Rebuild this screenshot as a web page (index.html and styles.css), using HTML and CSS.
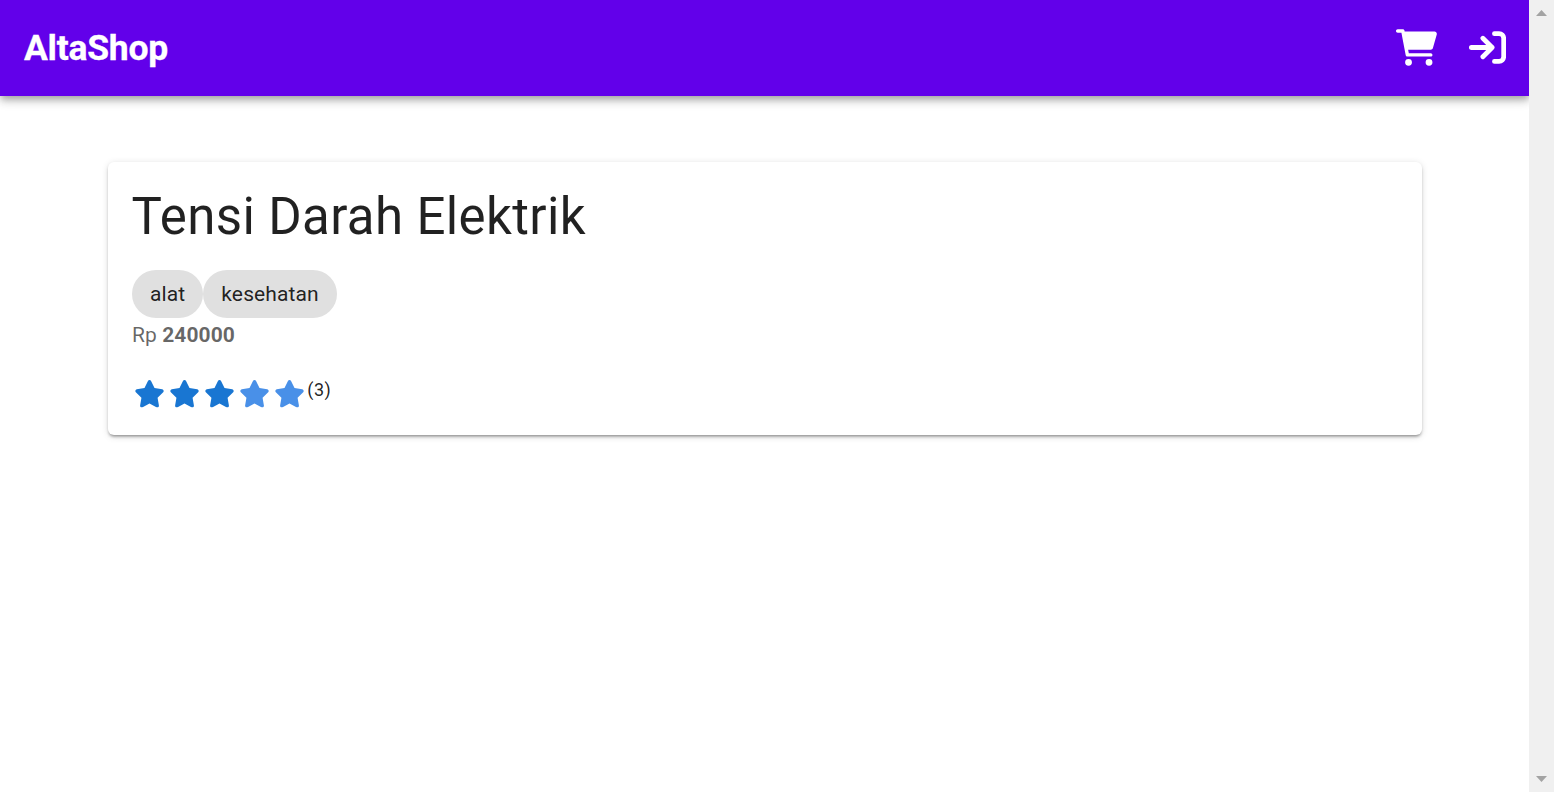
FILE: index.html
```html
<!DOCTYPE html>
<html lang="id">
<head>
<meta charset="utf-8">
<title>AltaShop</title>
<link rel="stylesheet" href="styles.css">
</head>
<body>
<svg class="defs" aria-hidden="true"><symbol id="star" viewBox="0 0 576 512"><path d="M316.9 18C311.6 7 300.4 0 288.1 0s-23.4 7-28.8 18L195 150.3 51.4 171.5c-12 1.8-22 10.2-25.7 21.7s-.7 24.2 7.9 32.7L137.8 329 113.2 474.7c-2 12 3 24.2 12.9 31.3s23 8 33.8 2.3l128.3-68.5 128.3 68.5c10.8 5.7 23.9 4.9 33.8-2.3s14.9-19.3 12.9-31.3L438.5 329 542.7 225.9c8.6-8.5 11.7-21.2 7.9-32.7s-13.7-19.9-25.7-21.7L381.2 150.3 316.9 18z"/></symbol></svg>
<div class="page">
  <div class="content">
    <header class="bar">
      <div class="brand">AltaShop</div>
      <nav class="actions">
        <svg class="cart" viewBox="0 0 576 512"><path d="M96 0C107.500 0 117.400 8.190 119.600 19.510L121.100 32H541.800C562.100 32 578.300 52.250 572.600 72.660L518.600 264.700C514.700 278.500 502.100 288 488.300 288H170.700L179.900 336H488C501.300 336 512 346.700 512 360C512 373.300 501.300 384 488 384H159.100C148.500 384 138.600 375.800 136.400 364.500L76.140 48H24C10.750 48 0 37.250 0 24C0 10.750 10.750 0 24 0H96zM128 464a48 48 0 1 1 96 0a48 48 0 1 1-96 0zM416 464a48 48 0 1 1 96 0a48 48 0 1 1-96 0z"/></svg>
        <svg class="login" viewBox="0 0 512 512"><path d="M32 256H320M192 128L320 256L192 384M352 64H416a64 64 0 0 1 64 64V384a64 64 0 0 1-64 64H352"/></svg>
      </nav>
    </header>
    <main class="main">
      <section class="card">
        <h1 class="title">Tensi Darah Elektrik</h1>
        <div class="chips"><span class="chip">alat</span><span class="chip">kesehatan</span></div>
        <div class="price">Rp <b>240000</b></div>
        <div class="rating">
          <svg class="star"><use href="#star"/></svg>
          <svg class="star"><use href="#star"/></svg>
          <svg class="star"><use href="#star"/></svg>
          <svg class="star dim"><use href="#star"/></svg>
          <svg class="star dim"><use href="#star"/></svg>
          <span class="count">(3)</span>
        </div>
      </section>
    </main>
  </div>
  <div class="scroll">
    <svg class="arrow" viewBox="0 0 11 6"><path d="M5.500 0L11 6H0z"/></svg>
    <svg class="arrow" viewBox="0 0 11 6"><path d="M0 0H11L5.500 6z"/></svg>
  </div>
</div>
</body>
</html>
```
FILE: styles.css
```css
* { box-sizing: border-box; }
body { margin: 0; background: #fff; font-family: Roboto, sans-serif; color: rgba(0, 0, 0, .87); }
.defs { display: none; }
.page { display: flex; height: 792px; overflow: hidden; }
.content { width: 1529px; overflow: hidden; }
.bar { display: flex; align-items: center; justify-content: space-between; height: 96px; padding: 0 24px; background: #6200ea; color: #fff; box-shadow: 0 3px 6px -1.5px rgba(0,0,0,.2), 0 6px 7.5px 0 rgba(0,0,0,.14), 0 1.5px 15px 0 rgba(0,0,0,.12); }
.brand { font-size: 35.5px; font-weight: 700; line-height: 48px; letter-spacing: -.25px; -webkit-text-stroke: .3px #fff; }
.actions { display: flex; align-items: center; gap: 32px; padding-bottom: 1px; }
.cart { width: 41px; height: 37px; fill: #fff; }
.login { width: 37px; height: 37px; fill: none; stroke: #fff; stroke-width: 66; stroke-linecap: round; stroke-linejoin: round; margin-right: -.6px; }
.main { padding: 66px 107px 0 108px; }
.card { height: 273px; padding: 24px; border-radius: 6px; background: #fff; box-shadow: 0 3px 3px -2px rgba(0,0,0,.3), 0 2px 3px 0 rgba(0,0,0,.14), 0 1.5px 7.5px 0 rgba(0,0,0,.12); }
.title { margin: 0 0 0 -.6px; font-size: 51px; font-weight: 400; line-height: 61px; letter-spacing: .375px; }
.chips { display: flex; margin-top: 23px; }
.chip { height: 48px; padding: 0 18px; border-radius: 24px; background: #e0e0e0; font-size: 21px; line-height: 48px; letter-spacing: .12px; }
.price { font-size: 21px; line-height: 35px; letter-spacing: .07px; color: rgba(0, 0, 0, .6); }
.rating { display: flex; height: 36px; margin-top: 23px; padding-left: 1.5px; }
.star { width: 31px; height: 27.5px; margin: 4px 4.200px 0 0; fill: #1976d2; }
.dim { fill: #4990e8; }
.count { margin-left: -2.3px; font-size: 18px; line-height: 28px; letter-spacing: .6px; }
.scroll { display: flex; flex-direction: column; align-items: center; justify-content: space-between; width: 25px; padding: 10px 0; background: #f0f0f0; }
.arrow { width: 11px; height: 6px; fill: #a3a3a3; }
```
